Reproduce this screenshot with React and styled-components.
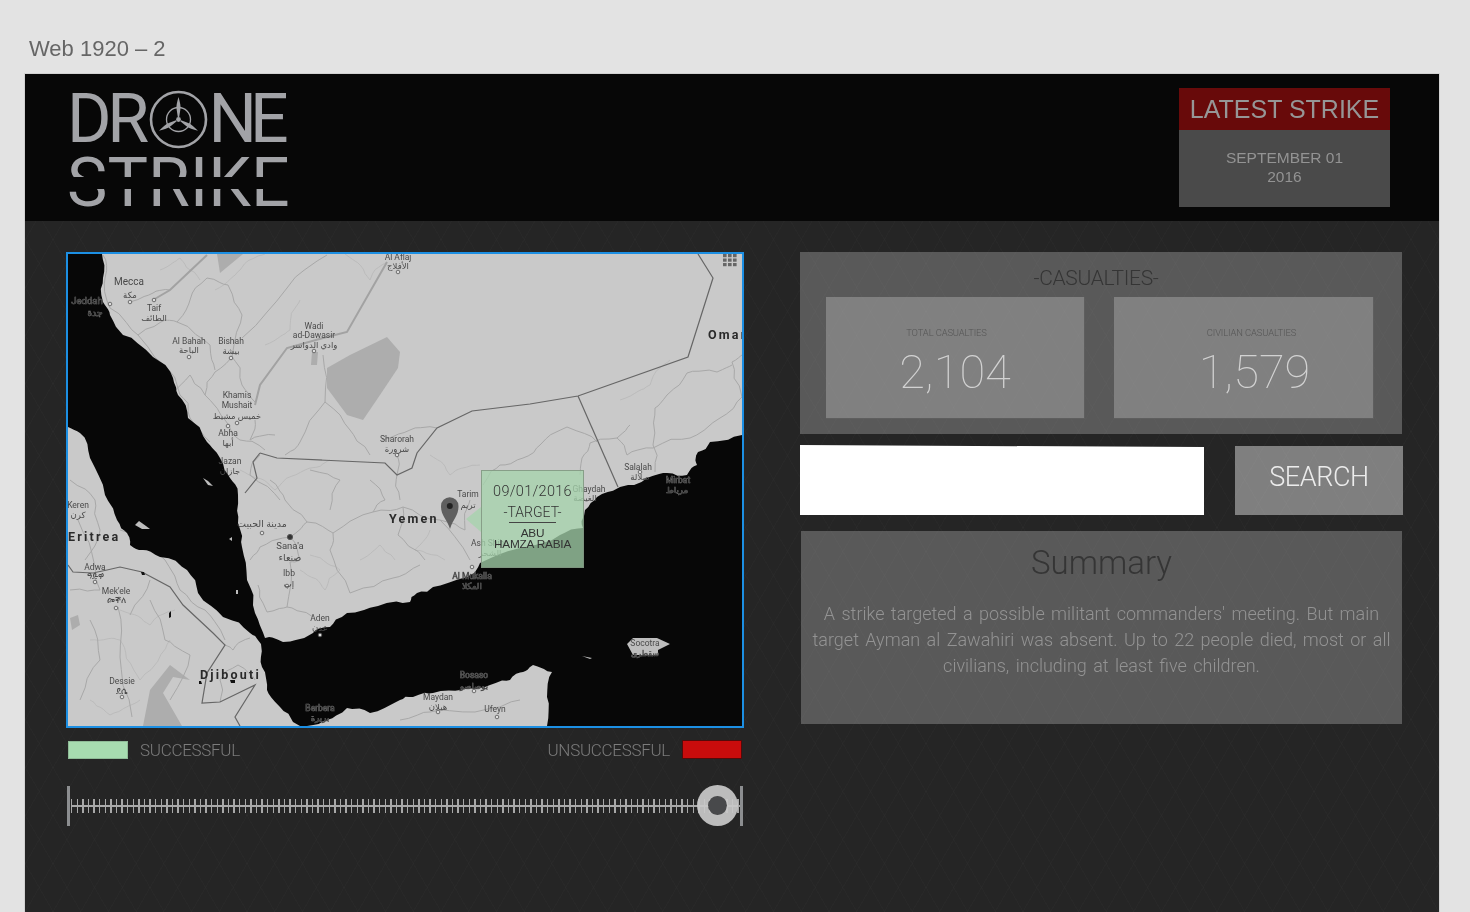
import React from 'react'
import styled, { createGlobalStyle } from 'styled-components'

const GlobalStyle = createGlobalStyle`
    html, body {
        margin: 0;
        height: 912px;
        overflow: hidden;
        background: #e3e3e3;
        font-family: "Liberation Sans", Arial, sans-serif;
    }
`;

const Page = styled.div`
    box-sizing: border-box;
    height: 912px;
    padding: 36px 31px 0 25px;
    overflow: hidden;
    opacity: .999;
`;

const ArtboardName = styled.div`
    margin-left: 4px;
    height: 38px;
    font-size: 22px;
    line-height: 25px;
    color: #666;
`;

const Artboard = styled.div`
    box-sizing: border-box;
    width: 1414px;
    height: 838px;
    outline: 1px solid #d2d2d2;
    background-color: #252525;
    background-image:
        repeating-linear-gradient(60deg, rgba(255,255,255,.016) 0 1px, transparent 1px 24px),
        repeating-linear-gradient(-60deg, rgba(255,255,255,.016) 0 1px, transparent 1px 24px);
`;

const Header = styled.header`
    box-sizing: border-box;
    height: 147px;
    padding: 14px 49px 0 42px;
    display: flex;
    justify-content: space-between;
    align-items: flex-start;
    background: #070707;
`;

const Logo = styled.div`
    width: 226px;
    color: #a2a3a7;
    font-family: Roboto, "Liberation Sans", sans-serif;
    font-weight: 400;
`;

const LogoRow = styled.div`
    height: 62px;
    display: flex;
    align-items: center;
    font-size: 68px;
    line-height: 62px;
    letter-spacing: -4.5px;
`;

const LogoTail = styled.span`
    letter-spacing: -7px;
`;

const LogoStrike = styled.div`
    position: relative;
    height: 56px;
    font-size: 68px;
    line-height: 66px;
    white-space: nowrap;

    &::after {
        content: "";
        position: absolute;
        left: -4px;
        right: -8px;
        top: 27px;
        height: 12px;
        background: #070707;
    }
`;

const StrikeBox = styled.div`
    width: 211px;
    text-align: center;
`;

const StrikeTitle = styled.div`
    height: 42px;
    background: #680a0a;
    color: #969696;
    font-size: 25px;
    line-height: 42px;
`;

const StrikeDate = styled.div`
    box-sizing: border-box;
    height: 77px;
    padding-top: 18px;
    background: #4a4a4a;
    color: #939393;
    font-size: 15.5px;
    line-height: 19px;
`;

const Body = styled.main`
    padding: 31px 37px 0 41px;
    display: grid;
    grid-template-columns: 678px 602px;
    column-gap: 56px;
    align-items: start;
`;

const LeftColumn = styled.section`
    display: flex;
    flex-direction: column;
`;

const MapFrame = styled.div`
    position: relative;
    box-sizing: border-box;
    height: 476px;
    border: 2px solid #1c8fe3;
    background: #c9c9c9;
    overflow: hidden;
`;

const MapSvg = styled.svg`
    display: block;
    width: 674px;
    height: 472px;
    filter: blur(.3px);
`;

const Popup = styled.div`
    position: absolute;
    left: 413px;
    top: 216px;
    box-sizing: border-box;
    width: 103px;
    height: 98px;
    padding-top: 12px;
    border: 1px solid rgba(125,145,125,.8);
    background: rgba(166,212,172,.76);
    color: #333;
    text-align: center;
    font-family: Roboto, sans-serif;
    font-weight: 300;

    &::before {
        content: "";
        position: absolute;
        left: -16px;
        top: 36px;
        width: 15px;
        height: 25px;
        background: rgba(166,212,172,.76);
        clip-path: polygon(100% 0, 0 48%, 100% 100%);
    }
`;

const PopupDate = styled.div`
    font-size: 14.5px;
    line-height: 17px;
    letter-spacing: .3px;
`;

const PopupTarget = styled.div`
    width: 47px;
    margin: 3px auto 0;
    padding: 0 0 1px;
    border-bottom: 1px solid #444;
    font-size: 14px;
    line-height: 18px;
    white-space: nowrap;
    display: flex;
    justify-content: center;
`;

const PopupName = styled.div`
    margin-top: 5px;
    font-size: 11.8px;
    line-height: 11px;
    font-family: "Liberation Sans", sans-serif;
    font-weight: 400;
    letter-spacing: -.2px;
`;

const Legend = styled.div`
    margin: 12px 2px 0 2px;
    height: 19px;
    display: flex;
    align-items: center;
    justify-content: space-between;
`;

const LegendItem = styled.div`
    display: flex;
    align-items: center;
    gap: 12px;
    color: #7b7b7b;
    font-family: Roboto, sans-serif;
    font-weight: 300;
    font-size: 17px;
    letter-spacing: -.3px;
`;

const Swatch = styled.span`
    box-sizing: border-box;
    width: 60px;
    height: ${p => (p.$red ? '19px' : '18px')};
    background: ${p => (p.$red ? '#c90c0c' : '#a7dcb0')};
    border: 1px solid ${p => (p.$red ? '#520b0b' : '#8fbb97')};
`;

const Slider = styled.div`
    position: relative;
    margin: 27px 0 0 1px;
    width: 676px;
    height: 40px;
    display: flex;
    align-items: center;
`;

const SliderEnd = styled.span`
    flex: none;
    width: 3px;
    height: 40px;
    background: #8c8e90;
`;

const SliderTrack = styled.div`
    flex: 1;
    height: 14px;
    margin-left: 1px;
    background-image:
        linear-gradient(#a9a9a9, #a9a9a9),
        repeating-linear-gradient(90deg, #a8a8a8 0 1.4px, transparent 1.4px 5.6px);
    background-size: 100% 2px, 100% 100%;
    background-position: 0 6px, 0 0;
    background-repeat: no-repeat;
`;

const SliderKnob = styled.span`
    position: absolute;
    left: 630px;
    top: -1px;
    box-sizing: border-box;
    width: 41px;
    height: 41px;
    border: 11.5px solid rgba(200,200,200,.93);
    border-radius: 50%;
    background: #48494b;
    background-clip: padding-box;
`;

const RightColumn = styled.section`
    display: flex;
    flex-direction: column;
`;

const CasualtiesPanel = styled.div`
    box-sizing: border-box;
    height: 182px;
    padding-top: 15px;
    background: rgba(255,255,255,.24);
`;

const PanelTitle = styled.h2`
    margin: 0;
    height: 30px;
    padding-right: 10px;
    text-align: center;
    color: #353535;
    font-family: Roboto, sans-serif;
    font-weight: 300;
    font-size: 21px;
    line-height: 22px;
    letter-spacing: -.3px;
`;

const CardRow = styled.div`
    padding: 0 28px 0 26px;
    display: grid;
    grid-template-columns: 259px 260px;
    column-gap: 29px;
`;

const Card = styled.div`
    box-sizing: border-box;
    height: 122px;
    padding-top: 30px;
    text-align: center;
    background: rgba(255,255,255,.235);
    border: 1px solid #5e5e5e;
    border-width: 0 1px 1px 0;
`;

const CardLabel = styled.div`
    height: 13px;
    margin-left: ${p => p.$shift}px;
    color: #555;
    font-family: Roboto, sans-serif;
    font-weight: 300;
    font-size: 9.4px;
    line-height: 11px;
    letter-spacing: -.1px;
`;

const CardNumber = styled.div`
    margin: 5px 0 0 ${p => p.$shift}px;
    color: #d2d2d2;
    font-family: Roboto, sans-serif;
    font-weight: 100;
    font-size: 47px;
    line-height: 54px;
`;

const SearchRow = styled.form`
    margin-top: 12px;
    height: 69px;
    display: flex;
    justify-content: space-between;
    width: 603px;
`;

const SearchInput = styled.input`
    box-sizing: border-box;
    width: 404px;
    height: 70px;
    margin-top: -1px;
    border: 0;
    background: #fff;
    clip-path: polygon(0 0, 100% 3%, 100% 100%, 0 100%);
`;

const SearchButton = styled.button`
    width: 168px;
    height: 69px;
    padding: 0 0 8px;
    border: 0;
    background: rgba(255,255,255,.417);
    color: #ececec;
    font-family: Roboto, sans-serif;
    font-weight: 300;
    font-size: 27px;
    letter-spacing: -.4px;
`;

const SummaryPanel = styled.div`
    box-sizing: border-box;
    height: 193px;
    margin: 16px 0 0 1px;
    width: 601px;
    padding: 11px 10px 0;
    background: rgba(255,255,255,.24);
    text-align: center;
`;

const SummaryTitle = styled.h2`
    margin: 0;
    height: 59px;
    color: #353535;
    font-family: Roboto, sans-serif;
    font-weight: 300;
    font-size: 33px;
    line-height: 42px;
`;

const SummaryText = styled.p`
    margin: 0;
    color: #939393;
    font-family: Roboto, sans-serif;
    font-weight: 300;
    font-size: 18px;
    line-height: 26px;
    word-spacing: 2px;
`;

const MapLabel = styled.text`
    font-family: Roboto, "DejaVu Sans", sans-serif;
    font-size: ${p => p.$size || 8.5}px;
    font-weight: ${p => p.$bold ? 700 : 400};
    letter-spacing: ${p => p.$bold ? '2.2px' : '0'};
    fill: ${p => p.$bold ? '#2a2a2a' : p.$sea ? '#3e3e3e' : '#4a4a4a'};
    stroke: ${p => p.$sea ? '#777' : 'none'};
    stroke-width: ${p => p.$sea ? '.6px' : '0'};
    paint-order: stroke;
    text-anchor: ${p => p.$bold ? 'start' : 'middle'};
`;

// midpoint displacement, so the hand traced outlines don't look like straight ruler lines
const roughen = (points, depth, amp) => {
    let pts = points
    let seed = 7
    const next = () => {
        seed = (seed * 16807) % 2147483647
        return (seed % 2000) / 1000 - 1
    }
    for (let d = 0; d < depth; d++) {
        const out = []
        pts.forEach((p, i) => {
            out.push(p)
            const q = pts[i + 1]
            if (!q) return
            const len = Math.hypot(q[0] - p[0], q[1] - p[1])
            const a = Math.min(amp, len * 0.18) / (d + 1)
            out.push([(p[0] + q[0]) / 2 + next() * a, (p[1] + q[1]) / 2 + next() * a])
        })
        pts = out
    }
    return pts
}

const toPath = pts => 'M' + pts.map(p => `${p[0].toFixed(1)} ${p[1].toFixed(1)}`).join(' L')

const coastA = [[102, 254], [103, 278], [103, 302], [110, 315], [123, 335], [153, 357], [173, 378], [178, 395], [188, 418], [207, 442],
    [220, 458], [230, 478], [238, 495], [238, 523], [242, 547], [247, 580], [255, 613], [265, 638], [283, 642], [313, 633], [330, 627], [347, 613], [378, 606],
    [410, 602], [417, 593], [433, 587], [467, 577], [480, 563], [520, 548], [560, 535], [583, 528], [585, 510], [597, 497], [620, 487], [647, 478], [667, 473],
    [687, 475], [697, 465], [698, 452], [710, 442], [742, 435]]

const coastB = [[547, 726], [547, 697], [552, 672], [533, 665], [523, 672], [510, 680], [490, 685],
    [460, 690], [433, 693], [413, 697], [400, 700], [370, 713], [347, 708], [327, 720], [307, 726]]

const coastC = [[293, 722], [280, 707], [267, 690], [262, 667],
    [261, 644], [250, 633], [223, 617], [198, 593], [187, 570], [160, 557], [143, 550], [130, 545], [127, 533], [117, 520], [105, 495], [90, 458], [80, 433], [68, 427]]

const seaPath = toPath([
    [68, 254],
    ...roughen(coastA, 2, 3),
    [742, 726],
    ...roughen(coastB, 2, 2.5),
    [300, 726],
    ...roughen(coastC, 2, 3),
]) + ' Z';

const roads = [
    [[103, 255], [105, 278], [110, 308], [138, 335], [173, 375], [180, 395], [190, 418], [210, 442]],
    [[130, 302], [153, 293], [170, 290]],
    [[177, 322], [190, 300], [207, 278], [228, 285], [242, 315], [232, 357], [242, 385], [255, 402]],
    [[242, 338], [287, 288], [327, 255]],
    [[232, 357], [215, 372], [205, 395], [225, 420], [240, 440], [265, 450]],
    [[138, 335], [165, 320], [177, 322], [210, 345], [215, 370]],
    [[323, 355], [325, 402], [300, 442], [285, 455]],
    [[325, 402], [350, 430], [370, 455]],
    [[742, 355], [732, 362], [742, 397], [720, 418], [690, 438], [653, 448]],
    [[732, 365], [717, 372], [687, 373], [667, 395], [655, 408], [653, 445], [655, 472]],
    [[630, 425], [617, 438], [590, 443], [582, 458], [580, 475]],
    [[597, 442], [567, 427], [540, 445], [523, 458], [500, 465], [483, 485]],
    [[617, 438], [627, 455], [653, 448]],
    [[307, 522], [333, 533], [373, 512], [403, 507], [440, 520], [470, 560]],
    [[333, 533], [330, 550], [350, 593], [393, 578], [420, 565]],
    [[290, 537], [307, 522], [285, 500], [270, 480]],
    [[290, 562], [287, 607], [313, 617]],
    [[287, 607], [267, 612], [258, 585]],
    [[250, 560], [260, 547], [290, 537], [300, 560], [290, 562]],
    [[118, 607], [120, 657], [132, 717]],
    [[225, 645], [233, 650], [250, 638]],
    [[78, 520], [95, 567], [100, 590], [70, 590]],
    [[220, 702], [220, 680], [238, 665], [255, 680]],
    [[120, 530], [140, 545], [165, 560], [180, 590], [205, 610], [225, 640]],
    [[382, 440], [410, 430], [437, 428]],
    [[397, 455], [397, 475], [400, 500]],
    [[403, 507], [398, 535], [425, 560]],
    [[440, 520], [465, 530], [470, 500]],
    [[280, 500], [250, 475], [260, 455]],
    [[310, 470], [340, 480], [330, 510]],
    [[370, 480], [385, 500], [373, 512]],
    [[70, 480], [95, 500], [100, 530], [85, 560]],
    [[150, 600], [165, 640], [190, 655], [170, 700]],
    [[90, 620], [100, 660], [80, 700]],
    [[130, 615], [150, 580]],
    [[255, 420], [250, 440], [275, 435]],
    [[168, 395], [190, 375], [205, 395]],
    [[400, 720], [430, 712], [475, 712], [520, 700]],
]

const faintRoads = [
    [[215, 290], [240, 270], [265, 254]],
    [[265, 345], [290, 330], [300, 300]],
    [[345, 254], [370, 280], [387, 262]],
    [[240, 470], [275, 490], [305, 470], [330, 460]],
    [[300, 570], [325, 590], [340, 570], [310, 555]],
    [[120, 610], [150, 625], [175, 610]],
    [[90, 640], [120, 640], [140, 680], [170, 640]],
    [[430, 455], [450, 475], [480, 465]],
    [[620, 400], [650, 385], [670, 360]],
    [[160, 270], [180, 258], [200, 280]],
    [[140, 700], [110, 715], [90, 700]],
    [[430, 530], [415, 550], [445, 560]],
    [[360, 560], [380, 545], [395, 560]],
]

const thickRoads = [
    [[153, 300], [170, 290], [207, 255]],
    [[255, 405], [260, 385], [287, 348], [323, 338], [347, 332], [387, 262]],
]

const borders = [
    'M260 453 L277 458 L385 463 L397 475 L412 468 L417 453 L437 428 L472 411 L530 404 L578 396 L688 357 L713 278 L698 254',
    'M578 396 L618 487',
    'M260 453 L253 462 L257 478 L245 493',
    'M68 565 L73 572 L93 573 L107 570 L120 567 L142 572 L170 587 L183 605 L213 633 L225 645 L207 673 L202 703 L220 702 L255 685 L235 717 L240 726',
]

const sands = [
    '387 337 400 352 398 368 380 395 363 420 347 415 327 388 327 368 350 355',
    '217 254 243 254 220 273',
    '170 665 190 680 173 677 163 693 182 726 143 726 150 690',
    '312 352 318 352 317 365 311 365',
    '70 618 78 615 80 625 72 630',
]

const seaIslands = [
    '627 644 633 638 657 638 670 644 658 650 658 655 633 655',
    '582 656 592 658 590 659',
    '135 525 139 521 146 526 150 529 142 529',
    '203 478 208 481 213 486 208 485',
    '229 539 232 537 232 541',
    '236 590 238 590 238 594 236 594',
]

const landSpots = [
    '141 572 144 572 145 575 142 575',
    '169 613 171 611 171 617 169 618',
    '199 681 201 681 202 684 199 684',
    '230 680 235 680 235 683 231 683',
]

const places = [
    ['Mecca', 129, 285, 10], ['مكة', 130, 298], ['Taif', 154, 311], ['الطائف', 154, 321],
    ['Jeddah', 87, 304, 9.5, true], ['جدة', 95, 316, 9, true], ['Al Bahah', 189, 344], ['الباحة', 189, 353],
    ['Bishah', 231, 344], ['بيشة', 231, 354], ['Wadi', 314, 329], ['ad-Dawasir', 314, 338], ['وادي الدواسر', 314, 348],
    ['Al Aflaj', 398, 260], ['الأفلاج', 398, 269], ['Khamis', 237, 398], ['Mushait', 237, 408], ['خميس مشيط', 237, 419],
    ['Abha', 228, 436], ['أبها', 228, 446], ['Jazan', 230, 464], ['جازان', 230, 474], ['Sharorah', 397, 442], ['شرورة', 397, 452],
    ['Salalah', 638, 470], ['صلالة', 640, 480], ['Mirbat', 678, 483, 8.5, true], ['مرباط', 677, 493, 8.5, true],
    ['Ghaydah', 589, 492], ['الغيضة', 585, 501], ['Tarim', 468, 497], ['تريم', 468, 508], ['Ash Shihr', 489, 546], ['الشحر', 490, 556],
    ["Sana'a", 290, 549, 9.5], ['صنعاء', 290, 561, 9.5], ['مدينة الحبيت', 262, 527, 9.5], ['Ibb', 289, 576], ['إب', 289, 587],
    ['Aden', 320, 621], ['عدن', 320, 631], ['Keren', 78, 508], ['كرن', 78, 518], ['Adwa', 95, 570], ['ዓድዋ', 95, 579], ["Mek'ele", 116, 594], ['መቐለ', 116, 603],
    ['Dessie', 122, 684], ['ደሴ', 122, 694], ['Berbera', 320, 711, 8.5, true], ['بربرة', 320, 721, 8.5, true],
    ['Bosaso', 474, 678, 8.5, true], ['بوصاصو', 474, 689, 8.5, true], ['Maydan', 438, 700], ['هيلان', 438, 710], ['Ufeyn', 495, 712],
    ['Socotra', 645, 646, 8.5], ['سقطرى', 645, 656, 8, true], ['Al Mukalla', 472, 579, 8.5, true], ['المكلا', 472, 589, 8.5, true],
]

const countries = [
    ['Oman', 708, 339], ['Yemen', 389, 523], ['Eritrea', 68, 541], ['Djibouti', 200, 679],
]

const towns = [
    [110, 304], [130, 302], [154, 300], [189, 357], [231, 358], [314, 351], [398, 272], [237, 423], [228, 426],
    [262, 533], [287, 586], [320, 635], [95, 582], [116, 608], [122, 697], [397, 455], [472, 567], [497, 717],
    [438, 712], [474, 691], [640, 472],
]

const gridDots = [0, 1, 2].flatMap(r => [0, 1, 2].map(c => [723 + c * 5, 254 + r * 4.5]))

const MapDrawing = () => (
    <MapSvg viewBox="68 254 674 472">
        <rect x="68" y="254" width="674" height="472" fill="#c9c9c9" />
        {sands.map(s => <polygon key={s} points={s} fill="#adadad" />)}
        {faintRoads.map((r, i) => <path key={i} d={toPath(roughen(r, 3, 5))} fill="none" stroke="#b8b8b8" strokeWidth=".8" />)}
        {roads.map((r, i) => <path key={i} d={toPath(roughen(r, 2, 4))} fill="none" stroke="#a8a8a8" strokeWidth="1" />)}
        {thickRoads.map((r, i) => <path key={i} d={toPath(r)} fill="none" stroke="#a2a2a2" strokeWidth="2" />)}
        {borders.map(d => <path key={d} d={d} fill="none" stroke="#666" strokeWidth="1.2" />)}
        {landSpots.map(s => <polygon key={s} points={s} fill="#111" />)}
        <path d={seaPath} fill="#070707" />
        {seaIslands.map(s => <polygon key={s} points={s} fill="#bdbdbd" />)}
        {towns.map(([x, y]) => <circle key={`${x}-${y}`} cx={x} cy={y} r="1.8" fill="#ddd" stroke="#555" strokeWidth=".8" />)}
        <circle cx="290" cy="537" r="2.6" fill="#333" stroke="#555" />
        {places.map(([name, x, y, size, sea]) => <MapLabel key={name} x={x} y={y} $size={size} $sea={sea}>{name}</MapLabel>)}
        {countries.map(([name, x, y]) => <MapLabel key={name} x={x} y={y} $size={12.5} $bold>{name}</MapLabel>)}
        {gridDots.map(([x, y]) => <rect key={`${x}-${y}`} x={x} y={y} width="3.6" height="3.2" fill="#666" />)}
        <path d="M450 529 C447 519 441 516 441 506 A8.7 8.7 0 0 1 458.5 506 C458.5 516 453 519 450 529 Z" fill="#5f5f5f" />
        <circle cx="449.8" cy="506" r="3" fill="#222" />
    </MapSvg>
)

const blade = 'M29.5 7 C30.8 12 32.2 16 31.3 20 L30.2 27 L28.8 27 L27.7 20 C26.8 16 28.2 12 29.5 7 Z'

const LogoMark = () => (
    <svg width="59" height="59" viewBox="0 0 59 59" style={{ flex: 'none', margin: '0 1px 0 4px' }}>
        <g fill="none" stroke="#a2a3a7">
            <circle cx="29.5" cy="29.5" r="27.5" strokeWidth="2.6" />
            <circle cx="29.5" cy="29.5" r="12" strokeWidth="1.3" />
        </g>
        <g fill="#a2a3a7">
            <path d={blade} />
            <path d={blade} transform="rotate(120 29.5 29.5)" />
            <path d={blade} transform="rotate(240 29.5 29.5)" />
            <circle cx="29.5" cy="29.5" r="2.4" />
        </g>
    </svg>
)

const App = () => (
    <Page>
        <GlobalStyle />
        <ArtboardName>Web 1920 – 2</ArtboardName>
        <Artboard>
            <Header>
                <Logo>
                    <LogoRow>DR<LogoMark /><LogoTail>NE</LogoTail></LogoRow>
                    <LogoStrike>STRIKE</LogoStrike>
                </Logo>
                <StrikeBox>
                    <StrikeTitle>LATEST STRIKE</StrikeTitle>
                    <StrikeDate>SEPTEMBER 01<br />2016</StrikeDate>
                </StrikeBox>
            </Header>
            <Body>
                <LeftColumn>
                    <MapFrame>
                        <MapDrawing />
                        <Popup>
                            <PopupDate>09/01/2016</PopupDate>
                            <PopupTarget>-TARGET-</PopupTarget>
                            <PopupName>ABU<br />HAMZA RABIA</PopupName>
                        </Popup>
                    </MapFrame>
                    <Legend>
                        <LegendItem><Swatch />SUCCESSFUL</LegendItem>
                        <LegendItem>UNSUCCESSFUL<Swatch $red /></LegendItem>
                    </Legend>
                    <Slider>
                        <SliderEnd />
                        <SliderTrack />
                        <SliderEnd />
                        <SliderKnob />
                    </Slider>
                </LeftColumn>
                <RightColumn>
                    <CasualtiesPanel>
                        <PanelTitle>-CASUALTIES-</PanelTitle>
                        <CardRow>
                            <Card>
                                <CardLabel $shift={-17}>TOTAL CASUALTIES</CardLabel>
                                <CardNumber $shift={0}>2,104</CardNumber>
                            </Card>
                            <Card>
                                <CardLabel $shift={16}>CIVILIAN CASUALTIES</CardLabel>
                                <CardNumber $shift={22}>1,579</CardNumber>
                            </Card>
                        </CardRow>
                    </CasualtiesPanel>
                    <SearchRow onSubmit={e => e.preventDefault()}>
                        <SearchInput type="text" aria-label="search" />
                        <SearchButton type="submit">SEARCH</SearchButton>
                    </SearchRow>
                    <SummaryPanel>
                        <SummaryTitle>Summary</SummaryTitle>
                        <SummaryText>
                            A strike targeted a possible militant commanders' meeting. But main target Ayman al Zawahiri was absent. Up to 22 people died, most or all civilians, including at least five children.
                        </SummaryText>
                    </SummaryPanel>
                </RightColumn>
            </Body>
        </Artboard>
    </Page>
)

export default App
